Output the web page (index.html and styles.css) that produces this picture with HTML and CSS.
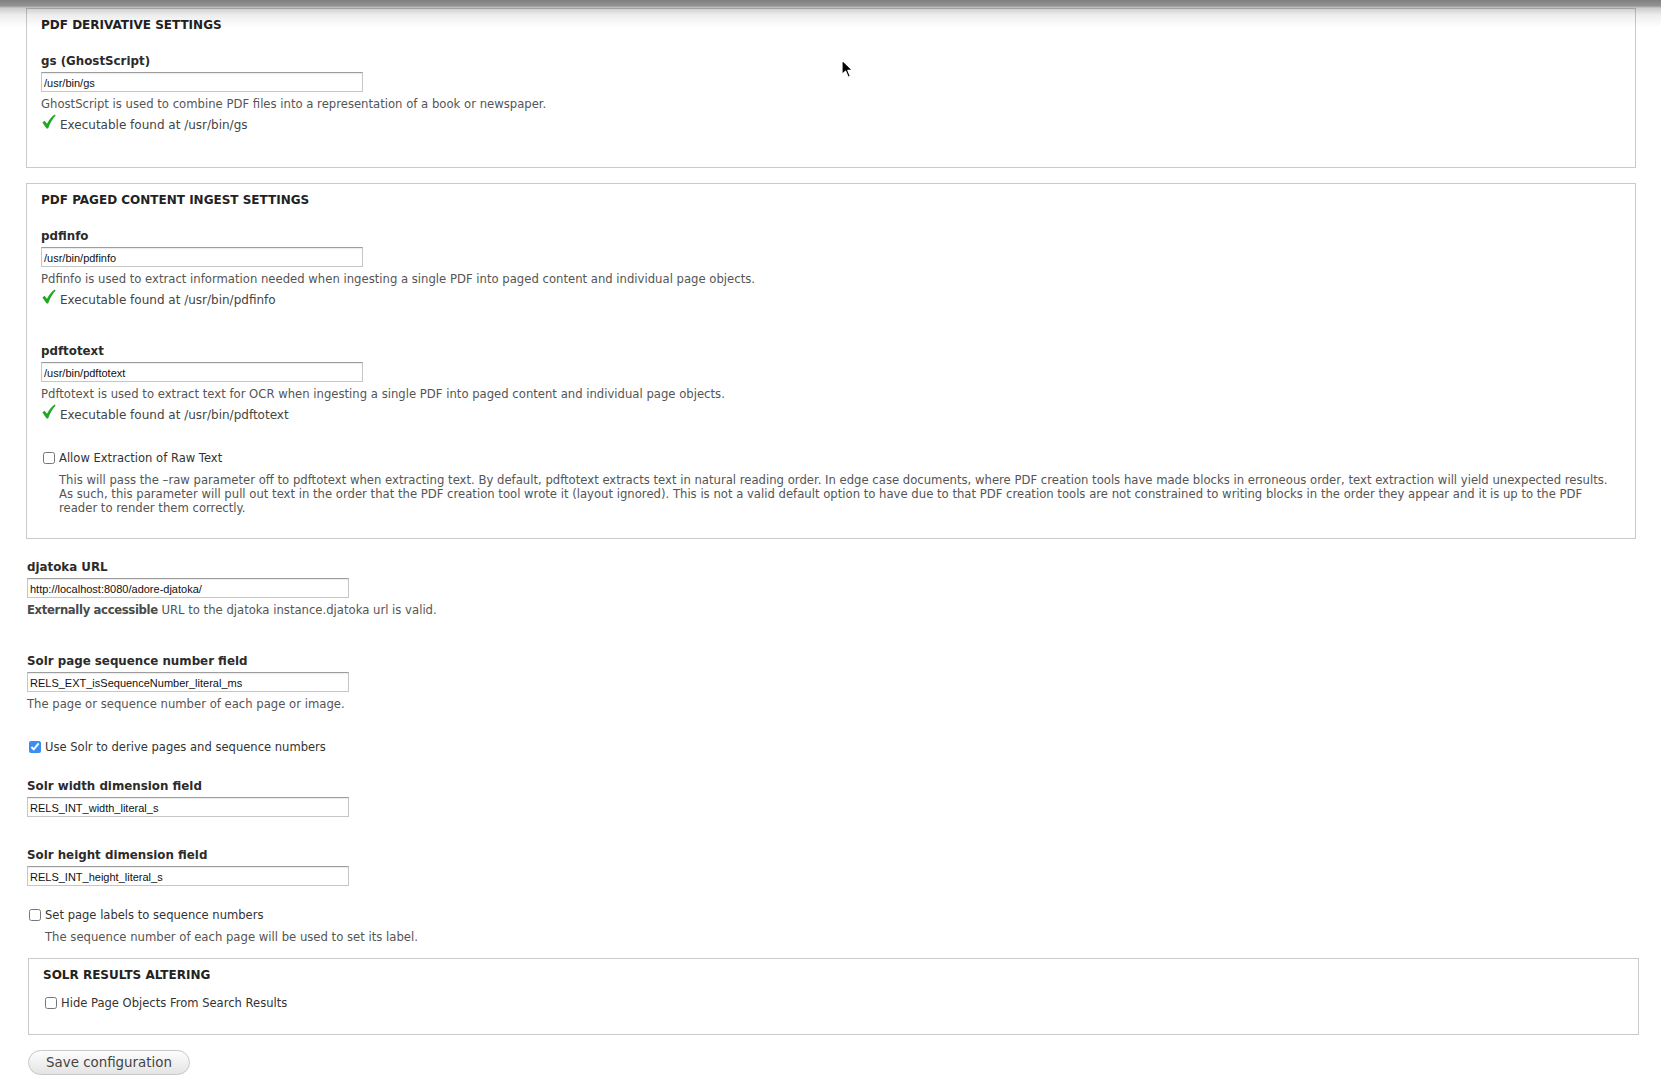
FILE: index.html
```html
<!DOCTYPE html>
<html lang="en">
<head>
    <meta charset="UTF-8">
    <title>Paged Content Settings</title>
    <link rel="stylesheet" href="styles.css">
</head>
<body>
    <div class="top-shade"></div>
    <svg class="cursor" width="13" height="20" viewBox="0 0 13 20">
        <path d="M1 1 L1 15.5 L4.6 12.2 L7.2 18.2 L9.4 17.2 L6.9 11.4 L11.6 11.4 Z" fill="#000" stroke="#fff" stroke-width="1.2" stroke-linejoin="round"/>
    </svg>

    <form class="page">
        <div class="group">
            <div class="legend">PDF Derivative Settings</div>
            <div class="item">
                <label class="label">gs (GhostScript)</label>
                <input class="text" type="text" value="/usr/bin/gs">
                <div class="desc">GhostScript is used to combine PDF files into a representation of a book or newspaper.</div>
                <div class="status">
                    <svg class="tick" width="14" height="15" viewBox="0 0 14 15"><path d="M0.4 8.6 L2.6 6.8 L5 9.8 C7 5.9 9.6 2.8 12.7 0.5 L13.6 1.4 C10.8 4.5 8.2 8.9 6.1 14.4 L4.6 14.4 Z" fill="#22a722"/></svg>
                    Executable found at /usr/bin/gs
                </div>
            </div>
        </div>

        <div class="group">
            <div class="legend">PDF Paged Content Ingest Settings</div>
            <div class="item">
                <label class="label">pdfinfo</label>
                <input class="text" type="text" value="/usr/bin/pdfinfo">
                <div class="desc">Pdfinfo is used to extract information needed when ingesting a single PDF into paged content and individual page objects.</div>
                <div class="status">
                    <svg class="tick" width="14" height="15" viewBox="0 0 14 15"><path d="M0.4 8.6 L2.6 6.8 L5 9.8 C7 5.9 9.6 2.8 12.7 0.5 L13.6 1.4 C10.8 4.5 8.2 8.9 6.1 14.4 L4.6 14.4 Z" fill="#22a722"/></svg>
                    Executable found at /usr/bin/pdfinfo
                </div>
            </div>
            <div class="item before-check">
                <label class="label">pdftotext</label>
                <input class="text" type="text" value="/usr/bin/pdftotext">
                <div class="desc">Pdftotext is used to extract text for OCR when ingesting a single PDF into paged content and individual page objects.</div>
                <div class="status">
                    <svg class="tick" width="14" height="15" viewBox="0 0 14 15"><path d="M0.4 8.6 L2.6 6.8 L5 9.8 C7 5.9 9.6 2.8 12.7 0.5 L13.6 1.4 C10.8 4.5 8.2 8.9 6.1 14.4 L4.6 14.4 Z" fill="#22a722"/></svg>
                    Executable found at /usr/bin/pdftotext
                </div>
            </div>
            <div class="check-item last">
                <label class="check"><input type="checkbox"> Allow Extraction of Raw Text</label>
                <div class="check-desc">This will pass the –raw parameter off to pdftotext when extracting text. By default, pdftotext extracts text in natural reading order. In edge case documents, where PDF creation tools have made blocks in erroneous order, text extraction will yield unexpected results.<br>As such, this parameter will pull out text in the order that the PDF creation tool wrote it (layout ignored). This is not a valid default option to have due to that PDF creation tools are not constrained to writing blocks in the order they appear and it is up to the PDF<br>reader to render them correctly.</div>
            </div>
        </div>

        <div class="loose">
            <div class="item">
                <label class="label">djatoka URL</label>
                <input class="text" type="text" value="http://localhost:8080/adore-djatoka/">
                <div class="desc"><strong>Externally accessible</strong> URL to the djatoka instance.djatoka url is valid.</div>
            </div>
            <div class="item before-check">
                <label class="label">Solr page sequence number field</label>
                <input class="text" type="text" value="RELS_EXT_isSequenceNumber_literal_ms">
                <div class="desc">The page or sequence number of each page or image.</div>
            </div>
            <div class="check-item solo">
                <label class="check"><input type="checkbox" checked> Use Solr to derive pages and sequence numbers</label>
            </div>
            <div class="item no-desc">
                <label class="label">Solr width dimension field</label>
                <input class="text" type="text" value="RELS_INT_width_literal_s">
            </div>
            <div class="item no-desc before-check2">
                <label class="label">Solr height dimension field</label>
                <input class="text" type="text" value="RELS_INT_height_literal_s">
            </div>
            <div class="check-item above-group">
                <label class="check"><input type="checkbox"> Set page labels to sequence numbers</label>
                <div class="check-desc">The sequence number of each page will be used to set its label.</div>
            </div>

            <div class="group nested">
                <div class="legend small-gap">Solr Results Altering</div>
                <div class="check-item last">
                    <label class="check"><input type="checkbox"> Hide Page Objects From Search Results</label>
                </div>
            </div>

            <button class="save" type="button">Save configuration</button>
        </div>
    </form>
</body>
</html>
```

FILE: styles.css
```css
html, body {
    margin: 0;
    padding: 0;
    background: #fff;
}

body {
    font-family: "DejaVu Sans", Verdana, sans-serif;
    color: #333;
    font-size: 12px;
}

.top-shade {
    position: fixed;
    left: 0;
    right: 0;
    top: 0;
    height: 30px;
    background: linear-gradient(rgba(0,0,0,0.5) 0px, rgba(0,0,0,0.42) 6px, rgba(0,0,0,0.2) 8px, rgba(0,0,0,0.07) 15px, rgba(0,0,0,0) 27px);
    pointer-events: none;
    z-index: 5;
}

.cursor {
    position: absolute;
    left: 841px;
    top: 59px;
    z-index: 6;
}

.page {
    padding: 8px 25px 0 26px;
}

.group {
    border: 1px solid #cacaca;
    padding: 8px 14px 0;
    margin-bottom: 15px;
}

.group > .item:last-child {
    margin-bottom: 34px;
}

.group.nested {
    margin: 0 -3px 15px 1px;
    padding-top: 8px;
}

.legend {
    font-weight: bold;
    font-size: 12px;
    line-height: 16px;
    color: #222;
    text-transform: uppercase;
    margin-bottom: 20px;
}

.legend.small-gap {
    margin-bottom: 12px;
}

.item {
    margin-bottom: 35px;
}

.item.before-check {
    margin-bottom: 27px;
}

.item.no-desc {
    margin-bottom: 30px;
}

.item.no-desc.before-check2 {
    margin-bottom: 21px;
}

.label {
    display: block;
    font-weight: bold;
    font-size: 11.85px;
    line-height: 16px;
    color: #2b2b2b;
    margin-bottom: 3px;
}

.text {
    display: block;
    box-sizing: border-box;
    width: 322px;
    height: 20px;
    margin: 0;
    padding: 1px 2px 0;
    border: 1px solid #c6c6c6;
    border-top-color: #9d9d9d;
    box-shadow: inset 0 1px 1px rgba(0,0,0,0.08);
    font-family: "Liberation Sans", Arial, sans-serif;
    font-size: 11px;
    color: #111;
    outline: none;
}

.desc {
    margin-top: 5px;
    font-size: 11.65px;
    line-height: 15px;
    color: #555;
}

.desc strong {
    color: #4a4a4a;
    letter-spacing: -0.35px;
}

.status {
    margin-top: 5px;
    font-size: 12px;
    line-height: 16px;
    color: #444;
    display: flex;
    align-items: flex-start;
}

.tick {
    margin: -3px 4px 0 1px;
    flex: none;
}

.check-item {
    margin-bottom: 27px;
}

.check-item.last {
    margin-bottom: 23px;
}

.check-item.solo {
    margin-bottom: 23px;
}

.check-item.above-group {
    margin-bottom: 14px;
}

.check {
    display: flex;
    align-items: center;
    font-size: 11.55px;
    line-height: 16px;
    color: #333;
}

.check input {
    width: 12px;
    height: 12px;
    margin: 0 4px 0 2px;
    accent-color: #3b8ef0;
}

.check-desc {
    margin-top: 7px;
    padding-left: 18px;
    font-size: 11.65px;
    line-height: 14px;
    color: #555;
}

.loose {
    padding-top: 5px;
    padding-left: 1px;
}

.save {
    display: block;
    height: 25px;
    padding: 0 17px;
    margin-left: 1px;
    border: 1px solid #c8c8c8;
    border-radius: 13px;
    background: linear-gradient(#fdfdfd, #e4e4e4);
    font-family: "DejaVu Sans", Verdana, sans-serif;
    font-size: 13.4px;
    color: #444;
}
```
